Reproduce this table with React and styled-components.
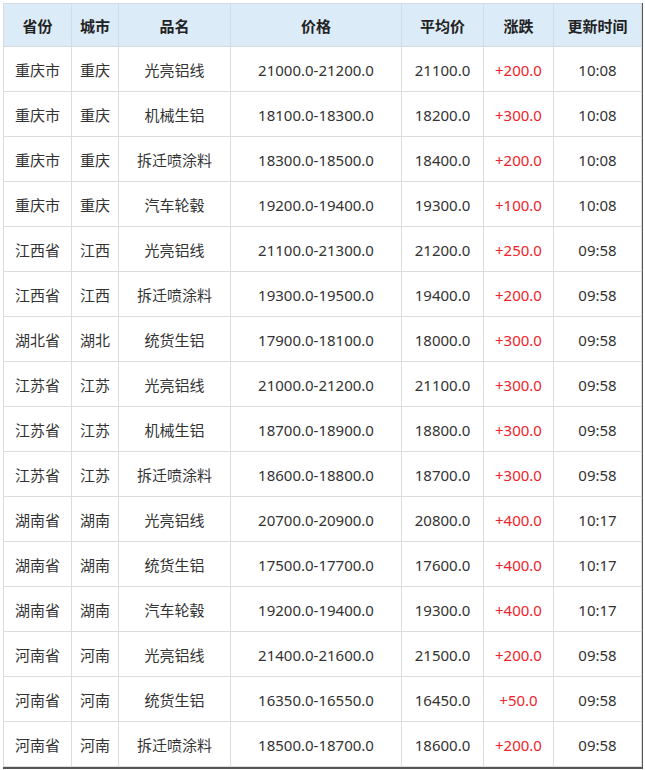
import React from 'react';
import styled, { createGlobalStyle } from 'styled-components';

const GlobalStyle = createGlobalStyle`
  html, body {
    margin: 0;
    padding: 0;
    background: #fff;
  }
  body {
    font-family: "Noto Sans", "Noto Sans CJK SC", sans-serif;
  }
`;

const Wrap = styled.div`
  width: 645px;
  height: 770px;
  padding: 3px 0 0 3px;
  box-sizing: border-box;
  overflow: hidden;
`;

const Frame = styled.div`
  width: 640px;
  border-right: 2px solid #555;
  border-bottom: 2px solid #555;
  box-sizing: border-box;
`;

const Table = styled.table`
  width: 638px;
  border-collapse: collapse;
  table-layout: fixed;
  color: #333;
  font-size: 15px;
`;

const Th = styled.th`
  height: 42px;
  background: #dcebf8;
  border: 1px solid #d4dbe3;
  font-weight: 700;
  color: #222;
  text-align: center;
  padding: 0;
`;

const Td = styled.td`
  height: 43px;
  border: 1px solid #dcdcdc;
  text-align: center;
  padding: 1px 0 0;
  color: ${(p) => (p.$up ? '#f0232a' : '#333')};
`;

const cols = [68, 47, 112, 171, 82, 70, 88];
const heads = ['省份', '城市', '品名', '价格', '平均价', '涨跌', '更新时间'];

const rows = [
  ['重庆市', '重庆', '光亮铝线', '21000.0-21200.0', '21100.0', '+200.0', '10:08'],
  ['重庆市', '重庆', '机械生铝', '18100.0-18300.0', '18200.0', '+300.0', '10:08'],
  ['重庆市', '重庆', '拆迁喷涂料', '18300.0-18500.0', '18400.0', '+200.0', '10:08'],
  ['重庆市', '重庆', '汽车轮毂', '19200.0-19400.0', '19300.0', '+100.0', '10:08'],
  ['江西省', '江西', '光亮铝线', '21100.0-21300.0', '21200.0', '+250.0', '09:58'],
  ['江西省', '江西', '拆迁喷涂料', '19300.0-19500.0', '19400.0', '+200.0', '09:58'],
  ['湖北省', '湖北', '统货生铝', '17900.0-18100.0', '18000.0', '+300.0', '09:58'],
  ['江苏省', '江苏', '光亮铝线', '21000.0-21200.0', '21100.0', '+300.0', '09:58'],
  ['江苏省', '江苏', '机械生铝', '18700.0-18900.0', '18800.0', '+300.0', '09:58'],
  ['江苏省', '江苏', '拆迁喷涂料', '18600.0-18800.0', '18700.0', '+300.0', '09:58'],
  ['湖南省', '湖南', '光亮铝线', '20700.0-20900.0', '20800.0', '+400.0', '10:17'],
  ['湖南省', '湖南', '统货生铝', '17500.0-17700.0', '17600.0', '+400.0', '10:17'],
  ['湖南省', '湖南', '汽车轮毂', '19200.0-19400.0', '19300.0', '+400.0', '10:17'],
  ['河南省', '河南', '光亮铝线', '21400.0-21600.0', '21500.0', '+200.0', '09:58'],
  ['河南省', '河南', '统货生铝', '16350.0-16550.0', '16450.0', '+50.0', '09:58'],
  ['河南省', '河南', '拆迁喷涂料', '18500.0-18700.0', '18600.0', '+200.0', '09:58'],
];

export default function App() {
  return (
    <Wrap>
      <GlobalStyle />
      <Frame>
        <Table>
          <colgroup>
            {cols.map((w, i) => (
              <col key={i} style={{ width: w }} />
            ))}
          </colgroup>
          <thead>
            <tr>
              {heads.map((h) => (
                <Th key={h}>{h}</Th>
              ))}
            </tr>
          </thead>
          <tbody>
            {rows.map((r, i) => (
              <tr key={`row${i}`}>
                {r.map((v, j) => (
                  <Td key={j} $up={j === 5}>
                    {v}
                  </Td>
                ))}
              </tr>
            ))}
          </tbody>
        </Table>
      </Frame>
    </Wrap>
  );
}
